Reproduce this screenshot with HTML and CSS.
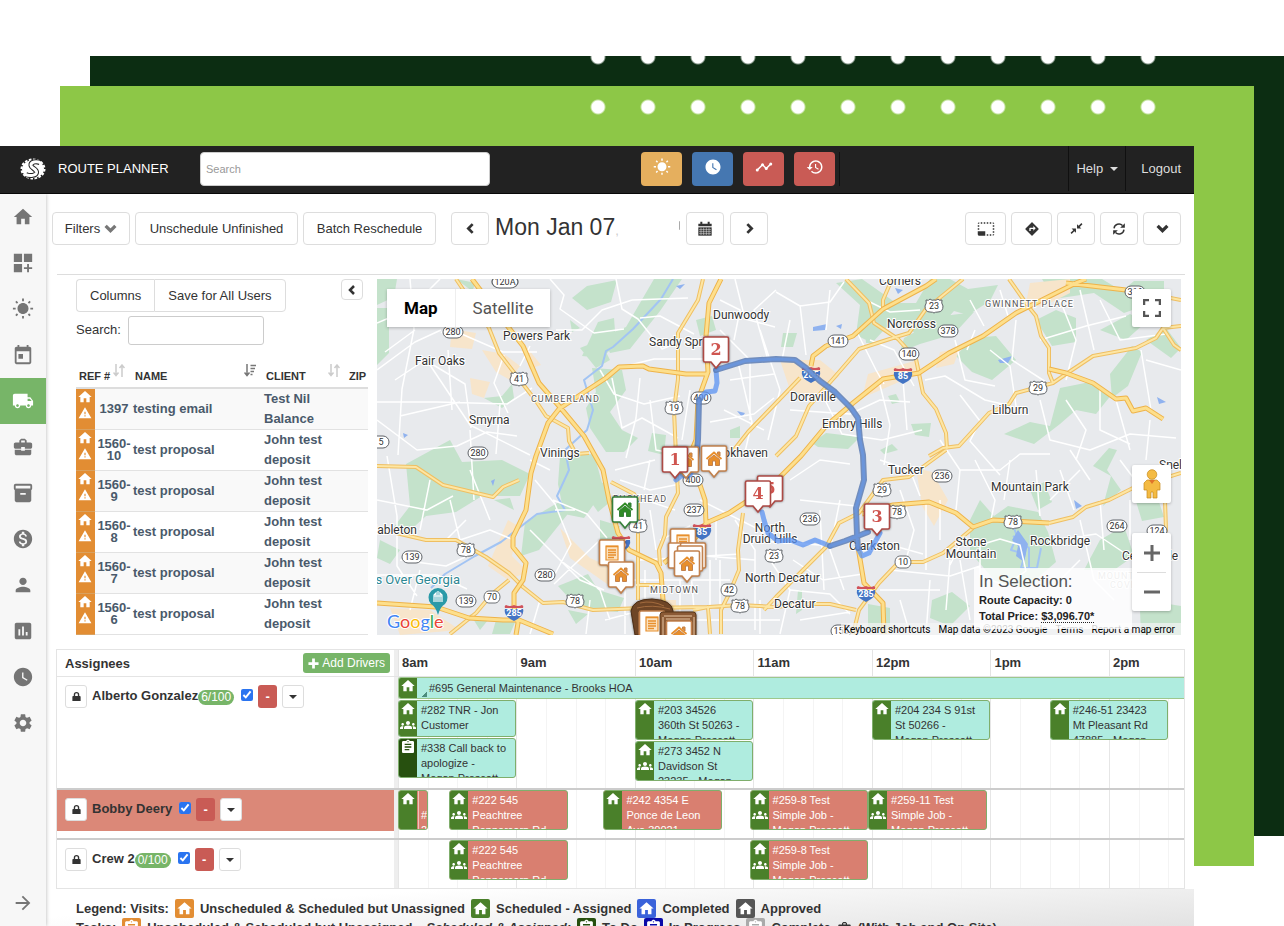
FILE: index.html
```html
<!DOCTYPE html>
<html lang="en">
<head>
<meta charset="utf-8">
<title>Route Planner</title>
<link rel="stylesheet" href="styles.css">
</head>
<body>
<svg class="defs" aria-hidden="true">
  <symbol id="i-home" viewBox="0 0 24 24"><path d="M10 20v-6h4v6h5v-8h3L12 3 2 12h3v8z"/></symbol>
  <symbol id="i-dash" viewBox="0 0 24 24"><path d="M2 2h9v9H2zM13 2h9v9h-9zM2 13h9v9H2zM18.500 13h-2v3.500H13v2h3.500V22h2v-3.500H22v-2h-3.500z"/></symbol>
  <symbol id="i-sun" viewBox="0 0 24 24"><path d="M6.760 4.840l-1.800-1.790-1.410 1.410 1.790 1.790 1.420-1.410zM4 10.500H1v2h3v-2zm9-9.950h-2V3.500h2V.55zm7.450 3.910l-1.410-1.410-1.790 1.790 1.410 1.410 1.790-1.790zm-3.210 13.700l1.790 1.800 1.410-1.410-1.800-1.790-1.400 1.400zM20 10.500v2h3v-2h-3zm-8-5c-3.310 0-6 2.690-6 6s2.690 6 6 6 6-2.690 6-6-2.690-6-6-6zm-1 16.950h2V19.500h-2v2.950zm-7.450-3.910l1.410 1.410 1.790-1.800-1.410-1.410-1.790 1.800z"/></symbol>
  <symbol id="i-today" viewBox="0 0 24 24"><path d="M19 3h-1V1h-2v2H8V1H6v2H5c-1.110 0-2 .9-2 2v15c0 1.100.9 2 2 2h14c1.100 0 2-.9 2-2V5c0-1.100-.9-2-2-2zm0 17H5V8h14v12zM7 11h5v5H7z"/></symbol>
  <symbol id="i-truck" viewBox="0 0 24 24"><path d="M20 8h-3V4H3c-1.100 0-2 .9-2 2v11h2c0 1.660 1.340 3 3 3s3-1.340 3-3h6c0 1.660 1.340 3 3 3s3-1.340 3-3h2v-5l-3-4zM6 18.500c-.83 0-1.500-.67-1.500-1.500s.67-1.500 1.500-1.500 1.500.67 1.500 1.500-.67 1.500-1.500 1.500zm13.500-9l1.960 2.500H17V9.500h2.500zm-1.500 9c-.83 0-1.500-.67-1.500-1.500s.67-1.500 1.500-1.500 1.500.67 1.500 1.500-.67 1.500-1.500 1.500z"/></symbol>
  <symbol id="i-case" viewBox="0 0 24 24"><path d="M10 16v-1H3v4c0 1.110.89 2 2 2h14c1.110 0 2-.89 2-2v-4h-7v1h-4zm10-9h-4V5l-2-2h-4L8 5v2H4c-1.100 0-2 .9-2 2v3c0 1.110.89 2 2 2h6v-2h4v2h6c1.100 0 2-.9 2-2V9c0-1.100-.9-2-2-2zm-6 0h-4V5h4v2z"/></symbol>
  <symbol id="i-box" viewBox="0 0 24 24"><path d="M20 2H4c-1 0-2 .9-2 2v3c0 .72.43 1.340 1 1.700V20c0 1.100 1.100 2 2 2h14c.9 0 2-.9 2-2V8.700c.57-.35 1-.97 1-1.700V4c0-1.100-1-2-2-2zm-5 12H9v-2h6v2zm5-7H4V4h16v3z"/></symbol>
  <symbol id="i-money" viewBox="0 0 24 24"><path d="M12 2C6.480 2 2 6.480 2 12s4.480 10 10 10 10-4.480 10-10S17.520 2 12 2zm1.410 16.090V20h-2.670v-1.930c-1.710-.36-3.160-1.460-3.270-3.400h1.960c.1 1.050.82 1.870 2.650 1.870 1.960 0 2.400-.98 2.400-1.590 0-.83-.44-1.610-2.670-2.140-2.480-.6-4.180-1.620-4.180-3.670 0-1.720 1.390-2.840 3.110-3.210V4h2.670v1.950c1.860.45 2.790 1.860 2.850 3.390H14.300c-.05-1.110-.64-1.870-2.220-1.870-1.500 0-2.400.68-2.400 1.640 0 .84.65 1.390 2.670 1.910s4.180 1.390 4.180 3.910c-.01 1.830-1.380 2.830-3.120 3.160z"/></symbol>
  <symbol id="i-person" viewBox="0 0 24 24"><path d="M12 12c2.210 0 4-1.790 4-4s-1.790-4-4-4-4 1.790-4 4 1.790 4 4 4zm0 2c-2.670 0-8 1.340-8 4v2h16v-2c0-2.660-5.330-4-8-4z"/></symbol>
  <symbol id="i-chart" viewBox="0 0 24 24"><path d="M19 3H5c-1.100 0-2 .9-2 2v14c0 1.100.9 2 2 2h14c1.100 0 2-.9 2-2V5c0-1.100-.9-2-2-2zM9 17H7v-7h2v7zm4 0h-2V7h2v10zm4 0h-2v-4h2v4z"/></symbol>
  <symbol id="i-clock" viewBox="0 0 24 24"><path d="M12 2C6.500 2 2 6.500 2 12s4.500 10 10 10 10-4.500 10-10S17.500 2 12 2zm4.200 14.200L11 13V7h1.500v5.200l4.500 2.700-.8 1.300z"/></symbol>
  <symbol id="i-gear" viewBox="0 0 24 24"><path d="M19.140 12.940c.04-.3.060-.61.060-.94 0-.32-.02-.64-.07-.94l2.030-1.580c.18-.14.230-.41.120-.61l-1.920-3.320c-.12-.22-.37-.29-.59-.22l-2.390.96c-.5-.38-1.030-.7-1.620-.94l-.36-2.540c-.04-.24-.24-.41-.48-.41h-3.840c-.24 0-.43.170-.47.410l-.36 2.540c-.59.240-1.130.570-1.620.940l-2.390-.96c-.22-.08-.47 0-.59.220L2.740 8.870c-.12.210-.08.470.120.610l2.030 1.580c-.05.300-.09.630-.09.940s.02.640.070.940l-2.030 1.580c-.18.140-.23.410-.12.610l1.920 3.320c.12.220.370.290.590.220l2.390-.96c.5.380 1.030.7 1.620.940l.36 2.540c.05.240.240.410.480.410h3.840c.24 0 .44-.17.470-.41l.36-2.540c.59-.24 1.130-.56 1.620-.94l2.390.96c.22.080.470 0 .59-.22l1.920-3.320c.12-.22.070-.47-.12-.61l-2.010-1.580zM12 15.600c-1.980 0-3.600-1.620-3.600-3.600s1.620-3.600 3.600-3.600 3.600 1.620 3.600 3.600-1.620 3.600-3.600 3.600z"/></symbol>
  <symbol id="i-arrow" viewBox="0 0 24 24"><path d="M12 4l-1.410 1.410L16.170 11H4v2h12.170l-5.580 5.590L12 20l8-8z"/></symbol>
  <symbol id="i-timeline" viewBox="0 0 24 24"><path d="M3 16L10 9l5 5 6-6" fill="none" stroke="currentColor" stroke-width="2"/><circle cx="3" cy="16" r="2"/><circle cx="10" cy="9" r="2"/><circle cx="15" cy="14" r="2"/><circle cx="21" cy="8" r="2"/></symbol>
  <symbol id="i-history" viewBox="0 0 24 24"><path d="M13 3c-4.970 0-9 4.030-9 9H1l4 4 4-4H6c0-3.870 3.130-7 7-7s7 3.130 7 7-3.130 7-7 7c-1.930 0-3.680-.79-4.940-2.060l-1.420 1.420C8.270 19.990 10.510 21 13 21c4.970 0 9-4.030 9-9s-4.030-9-9-9zm-1 5v5l4.280 2.540.72-1.210-3.500-2.080V8H12z"/></symbol>
  <symbol id="i-select" viewBox="0 0 24 24"><path d="M23 15h-2v2h2v-2zm0-4h-2v2h2v-2zm0 8h-2v2c1 0 2-1 2-2zM15 3h-2v2h2V3zm8 4h-2v2h2V7zm-2-4v2h2c0-1-1-2-2-2zM3 21h8v-6H1v4c0 1.100.9 2 2 2zM3 7H1v2h2V7zm12 12h-2v2h2v-2zm4-16h-2v2h2V3zm0 16h-2v2h2v-2zM3 3C2 3 1 4 1 5h2V3zm0 8H1v2h2v-2zm8-8H9v2h2V3zM7 3H5v2h2V3z"/></symbol>
  <symbol id="i-direct" viewBox="0 0 24 24"><path d="M21.710 11.290l-9-9c-.39-.39-1.020-.39-1.410 0l-9 9c-.39.390-.39 1.020 0 1.410l9 9c.39.390 1.020.390 1.410 0l9-9c.39-.38.390-1.010 0-1.410zM14 14.500V12h-4v3H8v-4c0-.55.450-1 1-1h5V7.500l3.500 3.500-3.500 3.500z"/></symbol>
  <symbol id="i-shrink" viewBox="0 0 24 24"><path d="M13 4l3 3 5-5 2 2-5 5 3 3h-8zM11 20l-3-3-5 5-2-2 5-5-3-3h8z"/></symbol>
  <symbol id="i-refresh" viewBox="0 0 24 24"><path d="M3.500 11A8.500 8.500 0 0 1 18 6M20.500 13A8.500 8.500 0 0 1 6 18" fill="none" stroke="currentColor" stroke-width="2.500"/><path d="M22 2v8h-8zM2 22v-8h8z"/></symbol>
  <symbol id="i-left" viewBox="0 0 24 24"><path d="M16 4l-8 8 8 8" fill="none" stroke="currentColor" stroke-width="5"/></symbol>
  <symbol id="i-right" viewBox="0 0 24 24"><path d="M8 4l8 8-8 8" fill="none" stroke="currentColor" stroke-width="5"/></symbol>
  <symbol id="i-down" viewBox="0 0 24 24"><path d="M3 7l9 9 9-9" fill="none" stroke="currentColor" stroke-width="6"/></symbol>
  <symbol id="i-cal" viewBox="0 0 24 24"><path d="M2 4h3V1h3v3h8V1h3v3h3v4H2z"/><path d="M2 9.500h20V22H2z"/><path d="M3 13h18M3 16h18M3 19h18M6 10v11M10 10v11M14 10v11M18 10v11" stroke="#fff" stroke-width=".7"/></symbol>
  <symbol id="i-warn" viewBox="0 0 24 24"><path d="M1 21h22L12 2 1 21zm12-3h-2v-2h2v2zm0-4h-2v-4h2v4z"/></symbol>
  <symbol id="i-crew" viewBox="0 0 24 24"><path d="M12 12.750c1.630 0 3.070.390 4.240.9 1.080.480 1.760 1.560 1.760 2.730V18H6v-1.610c0-1.180.680-2.260 1.760-2.730 1.170-.52 2.610-.91 4.240-.91zM4 13c1.100 0 2-.9 2-2s-.9-2-2-2-2 .9-2 2 .9 2 2 2zm1.130 1.100c-.37-.06-.74-.1-1.130-.1-.99 0-1.930.210-2.780.580A2 2 0 0 0 0 16.430V18h4.500v-1.610c0-.83.230-1.610.630-2.290zM20 13c1.100 0 2-.9 2-2s-.9-2-2-2-2 .9-2 2 .9 2 2 2zm4 3.430c0-.81-.48-1.530-1.220-1.850A7 7 0 0 0 20 14c-.39 0-.76.040-1.130.1.400.680.630 1.460.630 2.290V18H24v-1.570zM12 6c1.660 0 3 1.340 3 3s-1.340 3-3 3-3-1.340-3-3 1.340-3 3-3z"/></symbol>
  <symbol id="i-task" viewBox="0 0 24 24"><path d="M19 3h-4.180C14.400 1.840 13.300 1 12 1c-1.300 0-2.400.84-2.820 2H5c-1.100 0-2 .9-2 2v14c0 1.100.9 2 2 2h14c1.100 0 2-.9 2-2V5c0-1.100-.9-2-2-2zm-7 0c.55 0 1 .45 1 1s-.45 1-1 1-1-.45-1-1 .45-1 1-1zm2 14H7v-2h7v2zm3-4H7v-2h10v2zm0-4H7V7h10v2z"/></symbol>
  <symbol id="i-lock" viewBox="0 0 24 24"><path d="M5 11h1V8a6 6 0 0 1 12 0v3h1c1 0 2 1 2 2v9H3v-9c0-1 1-2 2-2zm4 0h6V8a3 3 0 0 0-6 0z"/></symbol>
  <symbol id="i-plus" viewBox="0 0 24 24"><path d="M9 1h6v8h8v6h-8v8H9v-8H1V9h8z"/></symbol>
  <symbol id="i-caret" viewBox="0 0 8 4"><path d="M0 0h8L4 4z"/></symbol>
  <symbol id="i-sort" viewBox="0 0 12 13"><path d="M3 0v11M9 2v11M0.500 8.500L3 11.500l2.500-3M6.500 4L9 1l2.500 3" fill="none" stroke="currentColor" stroke-width="1.500"/></symbol>
  <symbol id="i-sorted" viewBox="0 0 12 13"><path d="M3 0v11M0.500 8.500L3 11.500l2.500-3M6.500 1.500H12M6.500 4.500H11M6.500 7.500H10M6.500 10.500H8.500" fill="none" stroke="currentColor" stroke-width="1.500"/></symbol>
</svg>

<div class="stage">
  <div class="panel panel-dark"></div>
  <div class="panel panel-lime"></div>
  <div class="dots"></div>

  <div class="app">
    <header class="topbar">
      <svg class="logo" viewBox="0 0 26 22" aria-label="Logo">
        <ellipse cx="13" cy="11" rx="11" ry="9" fill="#fff"/>
        <ellipse cx="13" cy="11" rx="11.500" ry="9.500" fill="none" stroke="#fff" stroke-width="2" stroke-dasharray="2.600 1.500"/>
        <path d="M20 5C16 2.500 10.500 4 11 7.500C11.500 10.500 17 11 16.500 14.500C16 17.500 10.500 18.500 6 16.500" fill="none" stroke="#222" stroke-width="5"/>
        <path d="M21 5C16 2.500 10.500 4 11 7.500C11.500 10.500 17 11 16.500 14.500C16 17.500 10.500 18.500 5 16.500" fill="none" stroke="#fff" stroke-width="3"/>
      </svg>
      <span class="brand">ROUTE PLANNER</span>
      <input class="top-search" type="search" placeholder="Search" aria-label="Search">
      <div class="quick">
        <button class="q amber" aria-label="Weather"><svg><use href="#i-sun"/></svg></button>
        <button class="q blue" aria-label="Time clock"><svg><use href="#i-clock"/></svg></button>
        <button class="q red" aria-label="Activity"><svg><use href="#i-timeline"/></svg></button>
        <button class="q red" aria-label="History"><svg><use href="#i-history"/></svg></button>
      </div>
      <nav class="account">
        <a href="#">Help <svg class="caret"><use href="#i-caret"/></svg></a>
        <a href="#">Logout</a>
      </nav>
    </header>

    <div class="body">
      <nav class="sidebar">
        <a href="#" aria-label="Home"><svg><use href="#i-home"/></svg></a>
        <a href="#" aria-label="Dashboard"><svg><use href="#i-dash"/></svg></a>
        <a href="#" aria-label="Weather"><svg><use href="#i-sun"/></svg></a>
        <a href="#" aria-label="Calendar"><svg><use href="#i-today"/></svg></a>
        <a href="#" aria-label="Routes" class="active"><svg><use href="#i-truck"/></svg></a>
        <a href="#" aria-label="Jobs"><svg><use href="#i-case"/></svg></a>
        <a href="#" aria-label="Inventory"><svg><use href="#i-box"/></svg></a>
        <a href="#" aria-label="Billing"><svg><use href="#i-money"/></svg></a>
        <a href="#" aria-label="Clients"><svg><use href="#i-person"/></svg></a>
        <a href="#" aria-label="Reports"><svg><use href="#i-chart"/></svg></a>
        <a href="#" aria-label="Time"><svg><use href="#i-clock"/></svg></a>
        <a href="#" aria-label="Settings"><svg><use href="#i-gear"/></svg></a>
        <a href="#" aria-label="Expand" class="last"><svg><use href="#i-arrow"/></svg></a>
      </nav>

      <main>
        <div class="toolbar">
          <button class="btn muted">Filters <svg><use href="#i-down"/></svg></button>
          <button class="btn">Unschedule Unfinished</button>
          <button class="btn">Batch Reschedule</button>
          <div class="date">
            <button class="btn sq" aria-label="Previous day"><svg><use href="#i-left"/></svg></button>
            <h1>Mon Jan 07<span class="ghost">,</span></h1>
            <span class="ghost-end"></span>
            <button class="btn sq" aria-label="Pick date"><svg class="i16"><use href="#i-cal"/></svg></button>
            <button class="btn sq" aria-label="Next day"><svg><use href="#i-right"/></svg></button>
          </div>
          <div class="tools">
            <button class="btn wide" aria-label="Select area"><svg class="i18"><use href="#i-select"/></svg></button>
            <button class="btn wide" aria-label="Directions"><svg class="i16"><use href="#i-direct"/></svg></button>
            <button class="btn sq" aria-label="Compact"><svg><use href="#i-shrink"/></svg></button>
            <button class="btn sq" aria-label="Refresh"><svg class="i14"><use href="#i-refresh"/></svg></button>
            <button class="btn sq" aria-label="More"><svg><use href="#i-down"/></svg></button>
          </div>
        </div>
        <hr>

        <div class="workspace">
          <section class="jobs">
            <div class="jobs-top">
              <div class="group"><button class="btn">Columns</button><button class="btn">Save for All Users</button></div>
              <button class="btn collapse" aria-label="Collapse"><svg><use href="#i-left"/></svg></button>
            </div>
            <div class="find"><label for="find">Search:</label><input id="find" type="text"></div>
            <div class="table-wrap">
            <table>
              <colgroup><col class="c-flag"><col class="c-ref"><col class="c-name"><col class="c-client"><col class="c-zip"></colgroup>
              <thead><tr>
                <th colspan="2"><span>REF # <svg class="s1"><use href="#i-sort"/></svg></span></th>
                <th><span>NAME <svg class="dark"><use href="#i-sorted"/></svg></span></th>
                <th><span>CLIENT <svg><use href="#i-sort"/></svg></span></th>
                <th><span>ZIP</span></th>
              </tr></thead>
              <tbody>
                <tr><td class="flag"><svg><use href="#i-home"/></svg><svg><use href="#i-warn"/></svg></td><td class="ref">1397</td><td>testing email</td><td>Test Nil<br>Balance</td><td></td></tr>
                <tr><td class="flag"><svg><use href="#i-home"/></svg><svg><use href="#i-warn"/></svg></td><td class="ref">1560-<br>10</td><td>test proposal</td><td>John test<br>deposit</td><td></td></tr>
                <tr><td class="flag"><svg><use href="#i-home"/></svg><svg><use href="#i-warn"/></svg></td><td class="ref">1560-<br>9</td><td>test proposal</td><td>John test<br>deposit</td><td></td></tr>
                <tr><td class="flag"><svg><use href="#i-home"/></svg><svg><use href="#i-warn"/></svg></td><td class="ref">1560-<br>8</td><td>test proposal</td><td>John test<br>deposit</td><td></td></tr>
                <tr><td class="flag"><svg><use href="#i-home"/></svg><svg><use href="#i-warn"/></svg></td><td class="ref">1560-<br>7</td><td>test proposal</td><td>John test<br>deposit</td><td></td></tr>
                <tr><td class="flag"><svg><use href="#i-home"/></svg><svg><use href="#i-warn"/></svg></td><td class="ref">1560-<br>6</td><td>test proposal</td><td>John test<br>deposit</td><td></td></tr>
              </tbody>
            </table>
            </div>
          </section>

          <section class="map">
            <svg class="canvas" viewBox="377 279 804 356" preserveAspectRatio="xMidYMid slice">
              <defs>
                <g id="pin"><path d="M-11 0H11Q12.500 0 12.500 1.500V23.500Q12.500 25 11 25H5L0 31L-5 25H-11Q-12.500 25-12.500 23.500V1.500Q-12.500 0-11 0Z" fill="#fff" stroke-width="1.600"/></g>
                <g id="hs"><path d="M-7.500 13L0 6.500L7.500 13" fill="none" stroke="currentColor" stroke-width="1.800"/><path d="M3.500 6h2.500v4l-2.500-2zM-5.500 13.500L0 9L5.500 13.500V19.500H1.500V15H-1.500V19.500H-5.500Z" fill="currentColor"/></g>
                <g id="nt"><path d="M-6 6H6V20H-6Z" fill="#fbe3c2" stroke="currentColor" stroke-width="1.200"/><path d="M-6 6.500H6M-4 10H4M-4 12.500H4M-4 15H4M-4 17.500H2" stroke="currentColor" stroke-width="1.300"/></g>
                <rect id="ov" x="-10" y="-6" width="20" height="12" rx="6" fill="#fff" stroke="#5f6368"/>
                <path id="us" d="M-8-6Q-5-5-4-7Q-2-5 0-6Q2-5 4-7Q5-5 8-6Q7-3 9 0Q9 6 4 6Q1 6 0 7Q-1 6-4 6Q-9 6-9 0Q-7-3-8-6Z" fill="#fff" stroke="#5f6368"/>
                <g id="is"><path d="M-9-3H9Q11 4 0 9Q-11 4-9-3Z" fill="#4374c4"/><path d="M-9-4Q-10-6-8-7Q-4-5 0-7Q4-5 8-7Q10-6 9-4Z" fill="#d0525a"/></g>
              </defs>
              <rect x="377" y="279" width="804" height="356" fill="#e8eaed"/>
              <g fill="#c4e2cb">
                <path d="M377 279h20l-3 18-17 8zM377 308h12v45l-12 12zM456 279l20 4-4 8zM480 298l38-6 14 16-30 8zM572 298l15-12 30-6-6 22-24 8zM654 279h28l-22 32-30 38-20 4-8-16 24-10z"/>
                <path d="M598 322l16-4 2 26-14 14-20-2zM580 348l20-8 10 20-14 8zM592 368l30 2 4 20-16 22 12 18 16 8-14 14-18 0-16-24-4-20 10-16zM484 398l18-2 10-12 2 14-12 10zM652 433l14 2-2 20-16-4zM696 320l16-4 4 14-16 6zM570 320l10 8-8 4z"/>
                <path d="M406 464l44-24 12 22 40-2 28 14-10 22-38 0-26 16-30 4-22 20-14-4 20-26zM560 456l34-2 10 36-20 28-20-4-6-30zM525 522l34-20 12 8-32 40-18 6zM584 492l20-10 6 20-12 10zM600 520l20 6-4 14-16 0zM558 586l30-12 10 16 26 8-6 14-40-4zM380 540l20 10-10 14-13-6zM494 500l16-2 4 12zM496 620l20 0-6 14-18 0zM470 614l18 6-8 10zM568 610l20 4-12 10z"/>
                <path d="M836 283l26-4 34 24 20 0 14-24 20 0 18 10 30-4-8 16-22 14-14-4-16 18-20 6-24-16-22 24-16-8 4-30zM862 303l16 10-4 30-8 0zM904 338l40-22 30-4-20 22-34 10-20 8zM956 356l16-18 24-2 20 24-24 20-20-8zM783 333l14 0-4 14-12 0zM1042 279h60l20 12 12-10 30 0v18l-40 14-30-20-40 6zM1036 320l20-10 20 8 0 24-24 4zM1100 330l30-16 16 8-20 18zM1146 340l20-12 15 20-10 10zM1110 374l22-28 10 6-14 34-16 12zM1060 388l30-6 22 12-16 20-20-4-16 14-26 20-30-10 26-12 20 4z"/>
                <path d="M911 424l20-1-2 14-14-2zM888 396l8-2 4 8-8 2zM880 450l12-6 6 6-14 4zM812 443l14-10 34 4-12 12-30-2zM1093 466l16-18 8 2-10 20 14 20-18 16 8-30zM970 520l10-20 14 16 14-10 30 6 10 20 8 30-30 26-30-6-26-30zM1030 490l14-8 8 20-14 8zM1134 495l20-8 10 30-22 4zM1100 540l24-14 10 30-20 14-30 0zM1140 610l16-8 25 4v29h-40zM798 590l4 0 0 20-6 4zM868 604l22 4 0 22-22 0zM932 600l20-8 18 14-20 20-20-8zM730 430l10-4 0 12-10 0z"/>
              </g>
              <g fill="#f7e5cb">
                <path d="M452 329l24 4-4 16-22-2zM482 350l22 4 16 12-10 14-14-8zM470 378l20 4-6 16-12-4zM780 360l40 0 20 16-30 22-20-8zM868 374l50-14 4 12-60 26zM1030 283l40-4 0 14-28 14-16-4zM525 345l16 20-12 4zM508 520l10 6-6 30 16 16-20 8-20-14zM560 528l30 30 40 18-20 10-40-28zM390 608l40 2 30 20-60 5zM916 468l16 4 16 28-14 26-12-20zM940 352l20-4-6 16-18 4zM660 600l16 0 0 20-16 0z"/>
              </g>
              <g fill="none" stroke="#a2c4f3" stroke-width="2">
                <path d="M673 279l-12 20-28 30-20 18-7 4-4 15-18 14 9 30-6 20-22 20 4 20-12 26 8 14-28 4-36 28-26 14-30 18-14 14M1011 520l6 16-6 14 14 4-4 14 16 0 4-20M1013 536l16 12 0 20" stroke-linejoin="round"/>
              </g>
              <path d="M813 327l14-3-2 6-12 1zM836 326l6-2-1 5zM998 360l14-4-4 7-8 0zM895 288l8 2-5 4zM519 372l6 2-4 6zM737 411l8 2-3 4zM1157 397l9 5-7 2zM1074 500l8 6-6 3zM1018 530l10 14-4 18-8-6 2-10-6-6zM491 481l4-2-2 7zM676 286l9-2-5 5zM403 433l5 2-4 3z" fill="#8fb2ef"/>

              <g class="minor">
                <path d="M377 370l38-28 26-12M377 402l60 0 70 2 25-16M395 380l30-20 40 24 6 44M400 416l60-14M440 279l-30 30-33 14M410 279l4 50-12 60-4 66M441 333l14-14M415 330l-30 22M430 365l40 60 60 30M470 430l4 70M448 350l4 60M500 404l-4 50M377 420l40 30 40-4 30-14 30 4M457 332l46 20 34 0M504 355l-10 28 14 30"/>
                <path d="M550 279l14 16-4 14 34 24 30-4M556 330l26 0 20-20 30-10M530 346l-10 20M616 279l6 30 16 10 24 30 20-8M632 300l56-2M640 318l20-2 34 18M630 365l24-6 60 0M600 370l14 24 30 10 36-8M612 378l10 50 20-10 36 20M640 378l-4 40-10 40M650 400l6 50 20 4M720 300l20 10-6 30M735 279l10 40 30 8M720 330l30 30 0 60M738 362l14 60-8 34M730 380l44-6M724 410l40 20M710 422l44-8 20-16M760 330l20 60-12 50M690 390l-8 50M776 290l-22 20 14 50"/>
                <path d="M776 292l24 14 30-4 14-20M790 320l-8 40M800 305l6 50M830 290l-4 40M856 330l20 40 8 14M866 300l24 12 30-2M870 340l24 10 20 36M790 410l60 4 30-14 30 2M822 394l20 40 40 6 40-10M880 385l10 40-6 40M903 380l4 50M925 380l20-4 40 24 26 6M955 340l10 40 30 6M975 330l-8 20M960 395l20 26-10 20 30 34M990 350l20 16 6 40M1016 320l-4 40 34 22M970 300l14 26M1000 290l8 26M1060 300l16 40-10 40M1040 340l46-14 40-10M1080 290l14 60M1100 300l20 40 46-6M1066 400l20 30-10 30M1100 390l0 40 30 14M1040 400l10 40 40 10 40-16 46 4M1116 400l14 50M1150 420l-4 40M1141 350l10 60M1146 360l35 10M940 440l20 30 40 0 20-16 30 0"/>
                <path d="M387 456l10 60 0 50 20 30M377 500l50 10 26-14M430 480l-10 50M450 500l10 40 30-10 24 10M400 560l46 6 30-14M377 575l60 0 30 14M420 570l-10 40M470 470l20 50M466 520l-20 20M550 470l-20-10M535 480l20 24 16 40-16 30M530 530l50 50 24 10M553 500l34 14 20 24M575 510l-20 0M600 540l-46 44M560 560l40 30 10 30M590 600l-4 34M540 600l-10 34M605 620l30-8M625 570l0 64M645 570l0 64M680 580l0 55M690 560l6 74M710 560l0 74M720 560l0 74M610 580l120 0M640 560l100-6M640 620l140 0M650 510l6 40M645 500l30 10M660 540l30-14M620 480l30 10 30-6M615 470l40-10M650 460l-6 30M735 520l20 30 0 80M755 560l-50-4M716 520l0 40M700 500l60 30M745 540l90 6M760 600l0 34M770 560l20 30-10 44"/>
                <path d="M790 480l30-20 30 4M800 500l56 6M820 510l4 80M840 500l-10 50 14 40M880 460l30 10 10 26M900 490l14 40-8 30M926 500l0 70M940 500l0 40M950 560l-4 50M873 540l50 14M890 570l60 6 30-10M880 590l60 0M900 600l10 34M930 580l-4 54M960 560l10 60M793 560l30 20 40-6M790 590l40 4 20 20M800 620l50-8M960 470l-4 40M975 460l20 40-4 20M1010 460l-6 40M1036 470l4 46M1060 470l14 40M1050 500l30-30M1080 520l14 60 20 20M1100 500l4 50M1056 540l40-6 30 20M1090 480l-20-30M1120 460l30 40M1130 500l0 40M980 545l20-6 20 6 6 26-20 14-26-8zM960 545l-10 20M1060 580l20-20"/>
              </g>

              <g class="thin-o">
                <path id="r2" d="M456 279L489 328L499 353L519 379L536 401L546 416L568 428L569 441L576 454L589 453M703 279L698 300L678 333L678 379L674 410L676 456L678 493L666 517L665 535L659 550L660 566M776 456L796 436L809 406L833 379L859 349L899 336L909 333L926 309L963 279M846 279L869 303L874 323L898 339L916 359L923 393L936 409L946 433L947 449M892 279L883 300L883 309M1009 279L1028 306L1036 316L1041 336L1049 348L1049 373L1053 383M929 456L943 448L959 446L989 413L1009 404L1016 393L1053 383L1066 374L1093 356L1136 348L1156 338L1163 328L1181 326M946 450L909 477L883 480L859 513L839 523L826 547L803 570L776 597L764 610M973 528L943 553L923 562L899 562L879 583L859 610L853 634M1049 523L1073 517L1086 507L1109 500L1133 488L1181 473M377 466L416 467L443 485L493 497L503 487L519 480M396 533L426 540L456 540L486 557L509 573L523 587L543 603L563 602L593 610L643 608L709 607L739 605L776 607M509 580L492 594L476 613L450 634M638 496L638 600M636 585L662 585M743 513L738 550L739 570L729 594L721 610L721 634M729 456L748 432L776 403L800 378M693 610L708 607L710 634M611 482L634 494L638 500M1163 328L1174 345L1181 350M776 607L800 604L830 604L856 610M1165 500L1166 530L1150 580M1181 300L1150 294"/>
              </g>
              <use href="#r2" class="thin-i"/>
              <g class="wide-o">
                <path id="r1" d="M472 279L509 328L523 346L539 383L559 406L584 436L603 470L609 500L618 533L629 550L656 563L661 573L663 600L663 635M708 374L686 374L649 369L643 366L619 367L606 378L583 393L559 409L548 423L536 456L531 473L526 510L513 537L513 547L526 563L523 580L514 593L514 607L518 623L516 635M377 603L436 607L469 618L503 620L519 620L553 634M721 279L709 303L706 336L708 372L698 400L696 440L682 474L700 485L705 500L706 523M664 563L696 537L706 523L729 513L773 484L801 456L826 426L853 403L883 379L919 373L949 353L983 336L1016 313L1076 283L1086 279M811 366L813 356L826 346L853 336L883 309L926 286L936 279M1049 369L1066 373L1093 383L1116 399L1126 398L1133 411L1146 408L1163 419M858 547L864 583L883 603L884 634M862 514L893 505L929 502L956 513L973 527L993 520L1049 523M1066 283L1126 290"/>
              </g>
              <use href="#r1" class="wide-i"/>

              <g class="place">
                <text x="503" y="340">Powers Park</text><text x="415" y="365">Fair Oaks</text><text x="713" y="319">Dunwoody</text><text x="649" y="346">Sandy Springs</text><text x="469" y="424">Smyrna</text><text x="540" y="457">Vinings</text>
                <text x="768" y="457" text-anchor="end">Brookhaven</text><text x="417" y="534" text-anchor="end">Mableton</text>
                <text x="770" y="532" text-anchor="middle">North</text><text x="770" y="543" text-anchor="middle">Druid Hills</text><text x="745" y="582">North Decatur</text><text x="774" y="608">Decatur</text>
                <text x="849" y="550">Clarkston</text><text x="888" y="474">Tucker</text><text x="991" y="491">Mountain Park</text><text x="971" y="546" text-anchor="middle">Stone</text><text x="971" y="558" text-anchor="middle">Mountain</text><text x="1030" y="545">Rockbridge</text><text x="1122" y="560">Centerville</text><text x="1159" y="469">Snellville</text>
                <text x="879" y="285">Corners</text><text x="887" y="328">Norcross</text><text x="790" y="401">Doraville</text><text x="822" y="428">Embry Hills</text><text x="992" y="414">Lilburn</text>
              </g>
              <g class="area"><text x="531" y="402">CUMBERLAND</text><text x="613" y="502">BUCKHEAD</text><text x="650" y="593">MIDTOWN</text><text x="985" y="307">GWINNETT PLACE</text><text class="pale" x="1098" y="579">MOUNTAIN</text><text class="pale" x="1110" y="588">COVE</text></g>
              <text class="poi" x="460" y="584" text-anchor="end">Six Flags Over Georgia</text>
              <path d="M438 615Q436 607 431 604A9.500 9.500 0 1 1 445 604Q440 607 438 615Z" fill="#2a9aa8"/><path d="M434 602v-7l2-2v9M442 602v-7l-2-2v9M438 591v11M434 596h8" fill="none" stroke="#fff" stroke-width="1.200"/>

              <g class="shield">
                <g transform="translate(505 282)"><use href="#ov" transform="scale(1.300 1)"/><text y="3">120A</text></g><g transform="translate(453 332)"><use href="#ov"/><text y="3">280</text></g><g transform="translate(478 453)"><use href="#ov"/><text y="3">280</text></g><g transform="translate(379 442)"><use href="#ov"/><text x="2" y="3">5</text></g>
                <g transform="translate(701 398)"><use href="#ov"/><text y="3">400</text></g><g transform="translate(693 480)"><use href="#ov"/><text y="3">400</text></g><g transform="translate(838 341)"><use href="#ov"/><text y="3">141</text></g><g transform="translate(948 331)"><use href="#ov"/><text y="3">378</text></g><g transform="translate(909 354)"><use href="#ov"/><text y="3">140</text></g><g transform="translate(1135 292)"><use href="#ov"/><text y="3">316</text></g>
                <g transform="translate(412 557)"><use href="#ov"/><text y="3">139</text></g><g transform="translate(466 601)"><use href="#ov"/><text y="3">139</text></g><g transform="translate(492 597)"><use href="#ov" transform="scale(.8 1)"/><text y="3">70</text></g><g transform="translate(545 575)"><use href="#ov"/><text y="3">280</text></g><g transform="translate(694 510)"><use href="#ov"/><text y="3">237</text></g><g transform="translate(729 590)"><use href="#ov" transform="scale(.8 1)"/><text y="3">42</text></g>
                <g transform="translate(942 476)"><use href="#ov"/><text y="3">236</text></g><g transform="translate(810 519)"><use href="#ov"/><text y="3">236</text></g><g transform="translate(903 562)"><use href="#ov" transform="scale(.8 1)"/><text y="3">10</text></g><g transform="translate(1117 526)"><use href="#ov"/><text y="3">264</text></g><g transform="translate(1157 531)"><use href="#ov"/><text y="3">124</text></g><g transform="translate(841 631)"><use href="#ov"/><text y="3">155</text></g>
                <g transform="translate(519 379)"><use href="#us"/><text y="3">41</text></g><g transform="translate(674 408)"><use href="#us"/><text y="3">19</text></g><g transform="translate(934 306)"><use href="#us"/><text y="3">23</text></g><g transform="translate(1038 388)"><use href="#us"/><text y="3">29</text></g><g transform="translate(882 490)"><use href="#us"/><text y="3">29</text></g><g transform="translate(466 550)"><use href="#us"/><text y="3">78</text></g><g transform="translate(638 526)"><use href="#us"/><text y="3">41</text></g><g transform="translate(575 601)"><use href="#us"/><text y="3">78</text></g><g transform="translate(740 606)"><use href="#us"/><text y="3">78</text></g><g transform="translate(897 512)"><use href="#us"/><text y="3">78</text></g><g transform="translate(1013 522)"><use href="#us"/><text y="3">78</text></g><g transform="translate(774 556)"><use href="#us"/><text y="3">23</text></g>
                <g class="inter"><g transform="translate(811 374)"><use href="#is"/><text y="4">285</text></g><g transform="translate(903 375)"><use href="#is"/><text y="4">85</text></g><g transform="translate(866 593)"><use href="#is"/><text y="4">285</text></g><g transform="translate(702 531)"><use href="#is"/><text y="4">85</text></g><g transform="translate(514 612)"><use href="#is"/><text y="4">285</text></g><g transform="translate(621 543)"><use href="#is"/><text y="4">75</text></g></g>
              </g>

              <g fill="none" stroke-linejoin="round" stroke-linecap="round">
                <path d="M716 370L717 383L715 391L706 392L699 400M696 460L690 475L681 476L676 480M858 548L862 556L869 553L880 533M830 546L815 540L803 545L790 540L778 541L768 533L764 520L762 512" stroke="#5a92f2" stroke-opacity=".75" stroke-width="5"/>
                <path d="M716 370L745 361L776 359L795 360L806 368L820 381L835 392L851 408L858 418L860 440L863 455L864 480L856 508L857 535L858 548M699 400L698 440L696 460M868 532L845 541L830 546" stroke="#5c7cb4" stroke-opacity=".85" stroke-width="6"/>
                <path d="M716 370L745 361L776 359L795 360L806 368L820 381L835 392L851 408L858 418L860 440L863 455L864 480L856 508L857 535L858 548M699 400L698 440L696 460M868 532L845 541L830 546" stroke="#6a98e4" stroke-opacity=".75" stroke-width="3"/>
              </g>

              <g class="pins" stroke="#c2814d" color="#e88f2c">
                <g transform="translate(686 447)"><use href="#pin"/><use href="#hs"/></g>
                <g transform="translate(714 446)"><use href="#pin"/><use href="#hs"/></g>
                <g transform="translate(612 540)"><use href="#pin"/><use href="#nt"/></g>
                <g transform="translate(621 562)"><use href="#pin"/><use href="#hs"/></g>
                <g transform="translate(683 529)"><use href="#pin"/><use href="#nt"/></g>
                <g transform="translate(681 543)"><use href="#pin"/></g>
                <g transform="translate(693 543)"><use href="#pin"/></g>
                <g transform="translate(690 546)"><use href="#pin"/></g>
                <g transform="translate(687 551)"><use href="#pin"/><use href="#hs"/></g>
                <path d="M631 611Q633 599 652 599Q672 600 673 611V635H635Z" fill="#6e4526" stroke="#4b2c14"/>
                <path d="M640 603Q652 600 664 606M637 608Q652 604 670 609M639 612V635" fill="none" stroke="#a36b3e"/>
                <g transform="translate(652 611)"><use href="#pin"/><use href="#nt"/></g>
                <rect x="660" y="612" width="36" height="26" rx="3" fill="#8b5a35" stroke="#5b3719"/>
                <path d="M664 616H692M666 619H690M663 617V635M694 617V635" stroke="#e9c7a5"/>
                <g transform="translate(679 621)"><use href="#pin"/><use href="#hs"/></g>
              </g>
              <g class="pins" stroke="#35803a" color="#2f8a25"><g transform="translate(625 497)"><use href="#pin"/><use href="#hs"/></g></g>
              <g class="pins num" stroke="#ad4a45">
                <g transform="translate(675 447)"><use href="#pin"/><text y="18">1</text></g>
                <g transform="translate(716 337)"><use href="#pin"/><text y="18">2</text></g>
                <g transform="translate(770 476)"><use href="#pin"/><text y="18">5</text></g>
                <g transform="translate(758 481)"><use href="#pin"/><text y="18">4</text></g>
                <g transform="translate(877 504)"><use href="#pin"/><text y="18">3</text></g>
              </g>
              <text class="google" x="387" y="628"><tspan fill="#4285f4">G</tspan><tspan fill="#ea4335">o</tspan><tspan fill="#fbbc05">o</tspan><tspan fill="#4285f4">g</tspan><tspan fill="#34a853">l</tspan><tspan fill="#ea4335">e</tspan></text>
            </svg>

            <div class="map-type"><button class="on">Map</button><button>Satellite</button></div>
            <button class="ctl full" aria-label="Full screen"><svg viewBox="0 0 18 18"><path d="M1 6V1h5M12 1h5v5M17 12v5h-5M6 17H1v-5" fill="none" stroke="#555" stroke-width="2.500"/></svg></button>
            <div class="ctls">
              <button class="ctl" aria-label="Street view"><svg class="peg" viewBox="0 0 18 30"><circle cx="9" cy="5.500" r="4.800" fill="#f4bb43" stroke="#c48a1c" stroke-width=".7"/><path d="M4 11h10l3 3v7h-3v8H10v-6H8v6H4v-8H1v-7z" fill="#f4bb43" stroke="#c48a1c" stroke-width=".7"/><path d="M6 11h6l-3 4z" fill="#e0742a"/></svg></button>
              <div class="zoom"><button aria-label="Zoom in"><svg viewBox="0 0 18 18"><path d="M9 1v16M1 9h16" stroke="#666" stroke-width="3"/></svg></button><button aria-label="Zoom out"><svg viewBox="0 0 18 18"><path d="M1 9h16" stroke="#666" stroke-width="3"/></svg></button></div>
            </div>
            <div class="credits"><a href="#">Keyboard shortcuts</a><span>Map data ©2023 Google</span><a href="#">Terms</a><a href="#">Report a map error</a></div>
            <div class="selection"><h2>In Selection:</h2><p>Route Capacity: 0</p><p>Total Price: <abbr>$3,096.70*</abbr></p></div>
          </section>
        </div>

        <section class="schedule">
          <div class="row head">
            <div class="who"><b>Assignees</b><button class="add"><svg><use href="#i-plus"/></svg> Add Drivers</button></div>
            <div class="hours">
              <b style="grid-column:1 / span 60">8am</b><b style="grid-column:61 / span 60">9am</b><b style="grid-column:121 / span 60">10am</b><b style="grid-column:181 / span 60">11am</b><b style="grid-column:241 / span 60">12pm</b><b style="grid-column:301 / span 60">1pm</b><b style="grid-column:361 / span 38">2pm</b>
            </div>
          </div>

          <div class="row tall">
            <div class="who"><div class="driver">
              <button class="mini" aria-label="Lock"><svg><use href="#i-lock"/></svg></button><label for="d1">Alberto Gonzalez</label><span class="badge">6/100</span><input id="d1" type="checkbox" checked><button class="minus">-</button><button class="mini" aria-label="Menu"><svg class="caret"><use href="#i-caret"/></svg></button>
            </div></div>
            <div class="lane">
              <article class="ev long" style="grid-column:1 / span 398"><i><svg><use href="#i-home"/></svg></i><p>#695 General Maintenance - Brooks HOA</p></article>
              <div class="stack" style="grid-column:1 / span 60">
                <article class="ev short"><i><svg><use href="#i-home"/></svg><svg><use href="#i-crew"/></svg></i><p>#282 TNR - Jon<br>Customer</p></article>
                <article class="ev"><i class="task"><svg><use href="#i-task"/></svg></i><p>#338 Call back to<br>apologize -<br>Megan Prescott</p></article>
              </div>
              <div class="stack" style="grid-column:121 / span 60">
                <article class="ev"><i><svg><use href="#i-home"/></svg></i><p>#203 34526<br>360th St 50263 -<br>Megan Prescott</p></article>
                <article class="ev"><i><svg><use href="#i-home"/></svg><svg><use href="#i-crew"/></svg></i><p>#273 3452 N<br>Davidson St<br>23235 - Megan</p></article>
              </div>
              <div class="stack" style="grid-column:241 / span 60"><article class="ev"><i><svg><use href="#i-home"/></svg></i><p>#204 234 S 91st<br>St 50266 -<br>Megan Prescott</p></article></div>
              <div class="stack" style="grid-column:331 / span 60"><article class="ev"><i><svg><use href="#i-home"/></svg></i><p>#246-51 23423<br>Mt Pleasant Rd<br>47885 - Megan</p></article></div>
            </div>
          </div>

          <div class="row">
            <div class="who"><div class="driver hot">
              <button class="mini" aria-label="Lock"><svg><use href="#i-lock"/></svg></button><label for="d2">Bobby Deery</label><input id="d2" type="checkbox" checked><button class="minus">-</button><button class="mini" aria-label="Menu"><svg class="caret"><use href="#i-caret"/></svg></button>
            </div></div>
            <div class="lane">
              <article class="ev hot sliver" style="grid-column:1 / span 15"><i><svg><use href="#i-home"/></svg></i><p><br>#2<br>25</p></article>
              <article class="ev hot" style="grid-column:27 / span 60"><i><svg><use href="#i-home"/></svg><svg><use href="#i-crew"/></svg></i><p>#222 545<br>Peachtree<br>Peppercorn Rd</p></article>
              <article class="ev hot" style="grid-column:105 / span 60"><i><svg><use href="#i-home"/></svg></i><p>#242 4354 E<br>Ponce de Leon<br>Ave 30021</p></article>
              <article class="ev hot" style="grid-column:179 / span 60"><i><svg><use href="#i-home"/></svg><svg><use href="#i-crew"/></svg></i><p>#259-8 Test<br>Simple Job -<br>Megan Prescott</p></article>
              <article class="ev hot" style="grid-column:239 / span 60"><i><svg><use href="#i-home"/></svg><svg><use href="#i-crew"/></svg></i><p>#259-11 Test<br>Simple Job -<br>Megan Prescott</p></article>
            </div>
          </div>

          <div class="row">
            <div class="who"><div class="driver">
              <button class="mini" aria-label="Lock"><svg><use href="#i-lock"/></svg></button><label for="d3">Crew 2</label><span class="badge">0/100</span><input id="d3" type="checkbox" checked><button class="minus">-</button><button class="mini" aria-label="Menu"><svg class="caret"><use href="#i-caret"/></svg></button>
            </div></div>
            <div class="lane">
              <article class="ev hot" style="grid-column:27 / span 60"><i><svg><use href="#i-home"/></svg><svg><use href="#i-crew"/></svg></i><p>#222 545<br>Peachtree<br>Peppercorn Rd</p></article>
              <article class="ev hot" style="grid-column:179 / span 60"><i><svg><use href="#i-home"/></svg><svg><use href="#i-crew"/></svg></i><p>#259-8 Test<br>Simple Job -<br>Megan Prescott</p></article>
            </div>
          </div>
        </section>

        <footer class="legend">
          <p>Legend: Visits: <i class="k orange"><svg><use href="#i-home"/></svg></i> Unscheduled &amp; Scheduled but Unassigned <i class="k green"><svg><use href="#i-home"/></svg></i> Scheduled - Assigned <i class="k royal"><svg><use href="#i-home"/></svg></i> Completed <i class="k slate"><svg><use href="#i-home"/></svg></i> Approved</p>
          <p>Tasks: <i class="k orange"><svg><use href="#i-task"/></svg></i> Unscheduled &amp; Scheduled but Unassigned - <em>Scheduled &amp; Assigned:</em> <i class="k forest"><svg><use href="#i-task"/></svg></i> To Do <i class="k navy"><svg><use href="#i-task"/></svg></i> In Progress <i class="k gray"><svg><use href="#i-task"/></svg></i> Complete <svg class="inline"><use href="#i-case"/></svg> (With Job and On Site)</p>
        </footer>
      </main>
    </div>
  </div>
</div>
</body>
</html>
```
FILE: styles.css
```css
* { box-sizing: border-box; }
body { margin: 0; background: #fff; font-family: "Liberation Sans", Arial, sans-serif; font-size: 13px; color: #333; }
p, h1, h2 { margin: 0; }
button, input { font: inherit; color: inherit; margin: 0; }
button { cursor: pointer; padding: 0; border: 0; background: none; }
a { color: inherit; text-decoration: none; }
svg { fill: currentColor; display: block; flex: none; }
.defs { position: absolute; width: 0; height: 0; }

.stage { position: relative; height: 100vh; overflow: hidden; padding: 146px 90px 0 0; display: flex; }
.panel { position: absolute; }
.panel-dark { inset: 56px 0 90px 90px; background: #0c2d12; }
.panel-lime { inset: 86px 30px 60px 60px; background: #8dc747; }
.dots { position: absolute; top: 32px; right: 111px; width: 600px; height: 100px; background: radial-gradient(circle, #fff 6px, transparent 8px) 0 0 / 50px 50px; }

.app { position: relative; flex: 1; min-width: 0; background: #fff; display: flex; flex-direction: column; }
.topbar { flex: none; height: 48px; background: #222; color: #fff; display: flex; align-items: center; padding: 0 13px 2px 20px; border-bottom: 1px solid #080808; }
.logo { width: 26px; height: 22px; }
.brand { width: 142px; margin-left: 12px; line-height: 20px; }
.top-search { width: 290px; height: 34px; border: 1px solid #ccc; border-radius: 4px; background: #fff; padding: 0 5px; font-size: 11px; outline: 0; color: #333; }
.top-search::placeholder { color: #999; }
.quick { display: flex; gap: 10px; padding-right: 4px; margin-left: 151px; border-right: 1px solid #111; }
.q { width: 41px; height: 34px; border-radius: 4px; color: #fff; display: flex; justify-content: center; padding-top: 6px; }
.q svg { width: 18px; height: 18px; }
.amber { background: #e5af5e; }
.blue { background: #4577b1; }
.red { background: #c95b55; }
.account { margin-left: auto; display: flex; color: #ddd; align-self: stretch; }
.account a { display: flex; align-items: center; gap: 7px; padding: 0 7px; border-left: 1px solid #101010; line-height: 20px; }
.account a + a { padding: 0 0 0 15px; }
.caret { width: 8px; height: 4px; }

.body { flex: 1; min-height: 0; display: flex; overflow: hidden; }
.sidebar { width: 46px; flex: none; background: #f7f7f7; color: #757575; box-shadow: 0 0 4px rgba(0,0,0,.3); display: flex; flex-direction: column; z-index: 1; }
.sidebar a { height: 46px; display: flex; align-items: center; justify-content: center; }
.sidebar svg { width: 22px; height: 22px; }
.sidebar .active { background: #77b568; color: #fff; }
.sidebar .last { margin-top: auto; }
main { flex: 1; min-width: 0; }

.btn { height: 33px; padding: 0 11px; border: 1px solid #ddd; border-radius: 4px; background: #fff; display: flex; align-items: center; justify-content: center; gap: 4px; white-space: nowrap; }
.btn svg { width: 13px; height: 13px; }
.btn .i14 { width: 14px; height: 14px; }
.btn .i16 { width: 16px; height: 16px; }
.btn .i18 { width: 18px; height: 18px; }
.sq { width: 38px; padding: 0; }
.wide { width: 41px; padding: 0; }
.muted svg { color: #777; }
.toolbar { height: 80px; padding: 18px 13px 0 6px; display: flex; align-items: flex-start; gap: 5px; }
.toolbar > .btn:nth-child(1) { width: 78px; }
.toolbar > .btn:nth-child(2) { width: 163px; }
.toolbar > .btn:nth-child(3) { width: 133px; }
.date { display: flex; gap: 6px; margin-left: 10px; }
h1 { font-size: 23px; font-weight: 400; line-height: 30px; width: 177px; }
.ghost { color: #ccc; font-size: 13px; }
.ghost-end { width: 2px; height: 9px; margin-top: 9px; border-right: 1px solid #aaa; border-radius: 4px; }
.tools { margin-left: auto; display: flex; gap: 5px; }
hr { margin: 0 9px 0 11px; border: 0; border-top: 1px solid #ddd; }

.workspace { display: grid; grid-template-columns: 292px minmax(0,1fr); gap: 9px; padding: 4px 13px 0 30px; align-items: start; }
.jobs-top { display: flex; justify-content: space-between; padding-right: 5px; align-items: flex-start; }
.group { display: flex; }
.group .btn { padding: 0 13px; }
.group .btn:first-child { border-radius: 4px 0 0 4px; border-right: 0; }
.group .btn:last-child { border-radius: 0 4px 4px 0; }
.collapse { width: 22px; height: 21px; padding: 0; }
.collapse svg { width: 12px; height: 12px; }
.find { display: flex; gap: 7px; line-height: 28px; margin-top: 4px; }
.find input { width: 136px; height: 29px; border: 1px solid #ccc; border-radius: 3px; background: #fff; }
.table-wrap { overflow: hidden; }
table { width: 100%; border-collapse: collapse; table-layout: fixed; color: #4a5a6b; font-weight: 700; }
.c-flag { width: 19px; } .c-ref { width: 37px; } .c-name { width: 131px; } .c-client { width: 84px; } .c-zip { width: 21px; }
th { height: 43px; padding: 0 3px 4px; vertical-align: bottom; text-align: left; border-bottom: 2px solid #ddd; font-size: 11px; color: #333; line-height: 14px; white-space: nowrap; }
th span { display: flex; justify-content: space-between; }
th svg { width: 12px; height: 13px; color: #ccc; margin: -5px 4px 0 0; }
th .dark { color: #777; }
th:last-child { padding: 0 0 4px 2px; }
td { height: 41px; padding: 0 0 0 1px; border-bottom: 1px solid #e2e2e2; line-height: 20px; }
tbody tr:nth-child(odd) { background: #f9f9f9; }
.flag { background: #e28d33; color: #fff; border-bottom-color: #d9a15f; vertical-align: top; }
.flag svg { width: 16px; height: 16px; }
.flag svg + svg { width: 14px; height: 14px; margin: 1px; }
.ref { text-align: center; line-height: 12px; }

.map { position: relative; height: 356px; overflow: hidden; font-family: Roboto, sans-serif; }
.canvas { width: 100%; height: 100%; }
.minor { fill: none; stroke: #fff; stroke-width: 1.5; stroke-linejoin: round; }
.thin-o, .thin-i, .wide-o, .wide-i { fill: none; stroke-linejoin: round; }
.thin-o { stroke: #efbf62; stroke-width: 4; }
.thin-i { stroke: #fde6a4; stroke-width: 2; }
.wide-o { stroke: #eeb34a; stroke-width: 5; }
.wide-i { stroke: #fddf8c; stroke-width: 3; }
.canvas text { font-family: Roboto, sans-serif; stroke-width: 0; }
.place text { font-size: 12px; fill: #333; stroke: #fff; stroke-width: 2px; paint-order: stroke; }
.area text { font-size: 9px; letter-spacing: 1px; fill: #555; stroke: #fff; stroke-width: 2px; paint-order: stroke; }
.area .pale { fill: #aaa; }
.canvas .poi { font-size: 13px; fill: #2d8793; stroke: #fff; stroke-width: 2px; paint-order: stroke; }
.shield text { font-size: 9px; fill: #333; text-anchor: middle; }
.inter text { fill: #fff; font-weight: 700; }
.pins { filter: drop-shadow(0 0 1px rgba(0,0,0,.5)); }
.canvas .num text { font-family: "DejaVu Serif", serif; font-size: 16px; font-weight: 700; fill: #cf5550; text-anchor: middle; }
.canvas .google { font-family: Lato, sans-serif; font-size: 18px; stroke: #fff; stroke-width: 2px; paint-order: stroke; }
.map-type { position: absolute; left: 10px; top: 10px; height: 38px; background: #fff; display: flex; font-size: 17px; color: #555; box-shadow: 0 1px 3px rgba(0,0,0,.25); }
.map-type button { padding: 0 17px; }
.map-type .on { color: #000; font-weight: 700; border-right: 1px solid #eee; }
.ctl { width: 39px; height: 38px; background: #fff; display: grid; place-items: center; box-shadow: 0 1px 3px rgba(0,0,0,.25); border-radius: 2px; }
.ctl svg { width: 18px; height: 18px; }
.ctl .peg { width: 18px; height: 30px; }
.full { position: absolute; right: 10px; top: 10px; }
.ctls { position: absolute; right: 10px; bottom: 24px; display: grid; gap: 30px; z-index: 2; }
.zoom { background: #fff; display: grid; box-shadow: 0 1px 3px rgba(0,0,0,.25); border-radius: 2px; }
.zoom button { height: 39px; display: grid; place-items: center; }
.zoom button + button { margin: 0 5px; border-top: 1px solid #ddd; }
.zoom svg { width: 18px; height: 18px; }
.selection { position: absolute; right: 49px; bottom: 6px; width: 158px; height: 61px; padding: 4px 0 0 5px; background: rgba(255,255,255,.82); font-family: "Liberation Sans", Arial, sans-serif; font-size: 11px; line-height: 16px; font-weight: 700; color: #222; white-space: nowrap; }
.selection h2 { font-size: 17px; font-weight: 400; line-height: 20px; color: #555; }
abbr { border-bottom: 1px dotted #222; }
.credits { position: absolute; right: 0; bottom: 0; height: 12px; padding: 0 6px 0 3px; display: flex; gap: 8px; background: rgba(245,245,245,.7); font-size: 10px; line-height: 13px; color: #000; white-space: nowrap; }

.schedule { margin: 14px 9px 0 10px; border: 1px solid #e4e4e4; }
.row { display: grid; grid-template-columns: 341px minmax(0,1fr); height: 50px; border-top: 2px solid #ccc; }
.row.head { height: 27px; border-top: 0; border-bottom: 1px solid #e4e4e4; }
.row.tall { height: 111px; border-top: 0; }
.who { border-right: 4px solid #eee; }
.head .who { display: flex; justify-content: space-between; align-items: center; padding: 0 4px 0 8px; }
.add { height: 20px; padding: 0 5px; background: #77b568; color: #fff; border-radius: 3px; font-size: 12px; display: flex; align-items: center; gap: 3px; }
.add svg { width: 11px; height: 11px; }
.hours, .lane { display: grid; grid-template-columns: repeat(398, minmax(0,1fr)); }
.hours b { line-height: 26px; padding-left: 3px; border-left: 1px solid #e4e4e4; }
.lane { grid-auto-rows: max-content; row-gap: 1px; background:
  repeating-linear-gradient(90deg, #e6e6e6 0 1px, transparent 1px calc(100% * 60 / 398)),
  repeating-linear-gradient(90deg, #f4f4f4 0 1px, transparent 1px calc(100% * 15 / 398)); }
.stack { grid-row: 2; display: grid; gap: 1px; align-content: start; }
.ev { grid-row: 1; height: 40px; display: flex; border: 1px solid #7fae6c; border-radius: 3px; background: #afecdf; color: #333; overflow: hidden; }
.stack .ev { grid-row: auto; }
.stack .ev.short { height: 37px; }
.ev.long { height: 22px; border-right: 0; border-color: #9dc78d; border-radius: 3px 0 0 3px; }
.ev i { flex: none; width: 18px; background: #4a802a; color: #fff; }
.ev .task { background: #27500f; }
.ev i svg { width: 16px; height: 16px; margin: 0 1px; }
.ev p { padding: 2px 0 0 4px; line-height: 15px; white-space: nowrap; font-size: 11px; }
.ev.long p { padding: 3px 0 0 12px; background: linear-gradient(135deg, transparent 50%, #4c8c7c 50%) 5px 13px / 5px 6px no-repeat; }
.ev.hot { background: #d97f70; color: #fff; }
.ev.sliver p { margin-left: 1px; border-left: 1px solid #f0c5bd; padding-left: 2px; }
.driver { display: flex; align-items: flex-start; height: 41px; padding: 8px 0 0 8px; font-weight: 700; }
.driver.hot { background: #db8878; }
.driver label { margin-left: 5px; line-height: 22px; }
.mini { width: 22px; height: 23px; border: 1px solid #ddd; border-radius: 3px; background: #fff; display: grid; place-items: center; }
.mini svg { width: 11px; height: 11px; }
.mini .caret { width: 8px; height: 4px; }
.badge { height: 15px; margin-top: 5px; padding: 0 3px; border-radius: 8px; background: #77b568; color: #fff; font-size: 12px; line-height: 15px; font-weight: 400; }
.driver input { width: 12px; height: 12px; margin: 4px 5px 0 7px; accent-color: #2a74f0; }
.minus { width: 19px; height: 23px; margin-right: 5px; background: #c95b55; color: #fff; border-radius: 3px; font-weight: 700; }

.legend { height: 60px; padding: 10px 0 0 30px; background: linear-gradient(176deg, #fff 20%, #e0e0e0 90%); font-weight: 700; white-space: nowrap; overflow: hidden; }
.legend p { display: flex; align-items: center; gap: 6px; height: 19px; }
.k { width: 19px; height: 19px; border-radius: 2px; color: #fff; display: grid; place-items: center; }
.k svg { width: 17px; height: 17px; }
.inline { width: 15px; height: 15px; }
.orange { background: #e28d33; } .green { background: #4a802a; } .royal { background: #3a62da; } .slate { background: #555; }
.forest { background: #27500f; } .navy { background: #0a0aa8; } .gray { background: #aaa; }
```
